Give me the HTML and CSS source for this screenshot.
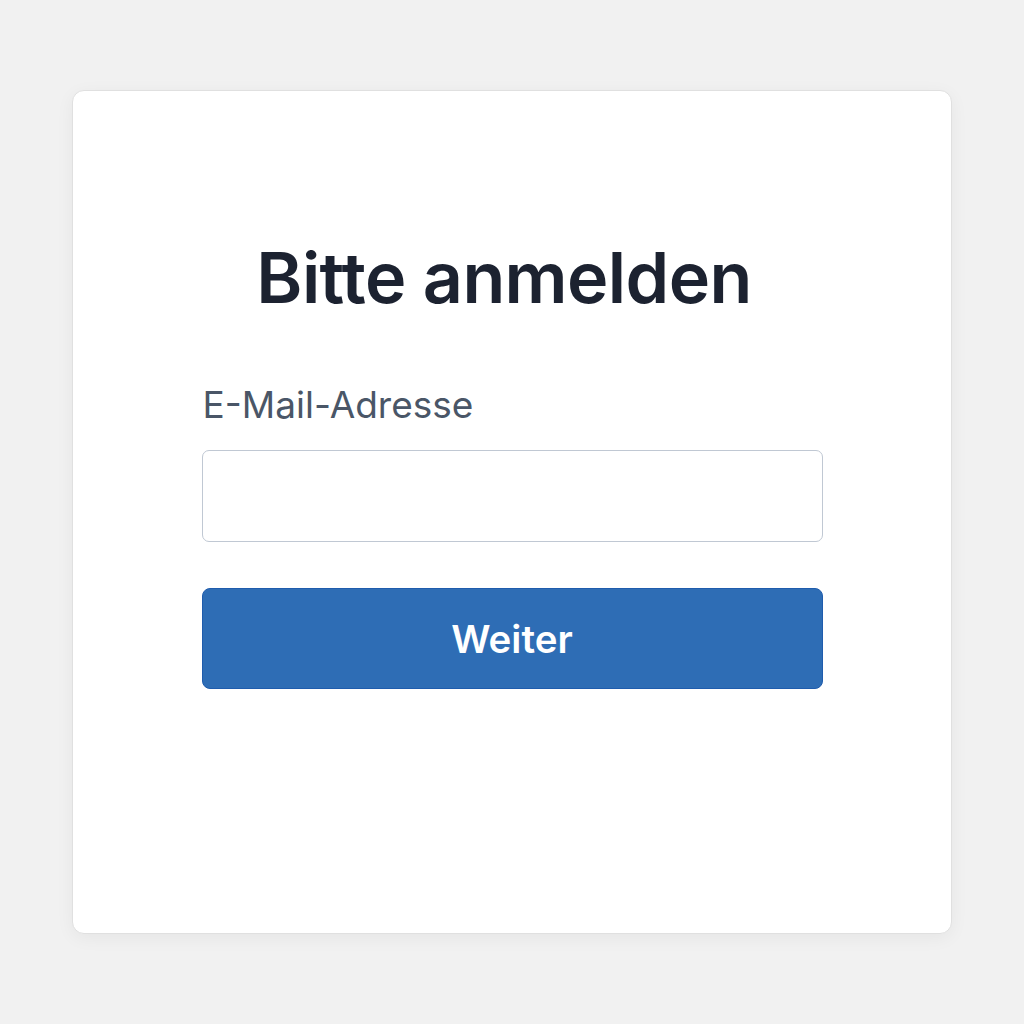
FILE: index.html
```html
<!DOCTYPE html>
<html>

<head>
  <title>Bitte anmelden</title>
  <link rel="stylesheet" href="styles.css">
</head>

<body>
  <div id="login-card">
    <h1 class="title">Bitte anmelden</h1>
    <form class="login-form" onsubmit="return false">
      <label class="label" for="email">E-Mail-Adresse</label>
      <input class="input" id="email" type="email">
      <button class="submit" type="submit">Weiter</button>
    </form>
  </div>
</body>

</html>
```

FILE: styles.css
```css
html, body {
  padding: 0;
  margin: 0;
  width: 100%;
  height: 100%;
  font-family: Inter, "Noto Sans", sans-serif;
  background: #f1f1f1;
}
body {
  display: flex;
  flex-direction: column;
  align-items: center;
  padding-top: 90px;
  box-sizing: border-box;
}
#login-card {
  width: 880px;
  height: 844px;
  padding-top: 145px;
  background: #ffffff;
  border: 1px solid #e0e0e0;
  border-radius: 12px;
  box-shadow: 0 4px 18px rgba(0, 0, 0, 0.05);
  box-sizing: border-box;
  display: flex;
  flex-direction: column;
  align-items: center;
}
#login-card .title {
  margin: 0 0 63px -16px;
  font-size: 70px;
  line-height: 1.2;
  font-weight: 600;
  color: #1c2230;
  text-align: center;
  letter-spacing: -0.6px;
}
.login-form {
  width: 621px;
  display: flex;
  flex-direction: column;
}
.login-form .label {
  font-size: 37px;
  line-height: 1.2;
  color: #4a5667;
  margin-bottom: 23px;
  padding-left: 1px;
}
.login-form .input {
  height: 92px;
  border: 1.5px solid #c0c8d3;
  border-radius: 7px;
  background: #ffffff;
  box-sizing: border-box;
  font-size: 30px;
  padding: 0 20px;
  margin: 0 0 46px 0;
  outline: none;
}
.login-form .submit {
  height: 101px;
  border: 1.5px solid #1f5cad;
  border-radius: 8px;
  background: #2e6db5;
  color: #ffffff;
  font-family: Inter, "Noto Sans", sans-serif;
  font-size: 38.5px;
  font-weight: 600;
  cursor: pointer;
  padding: 0;
}
```
